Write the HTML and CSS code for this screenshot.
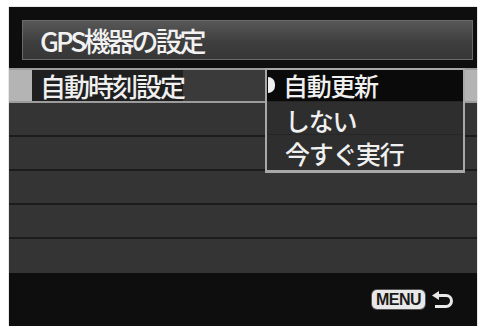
FILE: index.html
```html
<!DOCTYPE html>
<html lang="ja">
<head>
<meta charset="utf-8">
<link rel="stylesheet" href="styles.css">
</head>
<body>
<div class="screen">
  <div class="title">GPS機器の設定</div>
  <div class="list">
    <div class="row row-sel">
      <div class="sel-left"></div>
      <div class="label">自動時刻設定</div>
      <div class="fill"></div>
      <div class="sel-right"></div>
    </div>
    <div class="row"></div>
    <div class="row"></div>
    <div class="row"></div>
    <div class="row"></div>
    <div class="row last"></div>
    <div class="dropdown">
      <div class="item item-on"><span class="caret"></span>自動更新</div>
      <div class="item">しない</div>
      <div class="item">今すぐ実行</div>
    </div>
  </div>
  <div class="footer">
    <span class="menu-badge">MENU</span>
    <svg class="back" width="24" height="18" viewBox="0 0 24 18">
      <path d="M7 4.5 H15 A5.5 5.5 0 0 1 15 15.5 H4" fill="none" stroke="#e8e8e8" stroke-width="3"/>
      <polygon points="1,4.5 8,0 8,9" fill="#e8e8e8"/>
    </svg>
  </div>
</div>
</body>
</html>
```
FILE: styles.css
```css
html, body {
  margin: 0;
  padding: 0;
  background: #ffffff;
}
body {
  font-family: "Noto Sans CJK JP", "Noto Sans", sans-serif;
  font-weight: 500;
  color: #f0f0f0;
}
.screen {
  margin: 7px 0 0 9px;
  width: 468px;
  height: 319px;
  background: #0e0e0e;
  display: flex;
  flex-direction: column;
  box-shadow: 0 0 1px #777;
}
.title {
  margin: 13px 4px 0 13px;
  height: 40px;
  box-sizing: border-box;
  border: 1px solid #6a6a6a;
  background: linear-gradient(#585858, #3e3e3e 55%, #363636);
  font-size: 27px;
  line-height: 40px;
  padding-left: 17px;
  letter-spacing: -3px;
  color: #f2f2f2;
  overflow: hidden;
}
.list {
  margin-top: 8px;
  position: relative;
  display: flex;
  flex-direction: column;
}
.row {
  height: 34px;
  box-sizing: border-box;
  background: #343434;
  border-bottom: 2px solid #1c1c1c;
}
.row.last {
  border-bottom: none;
}
.row-sel {
  height: 35px;
  display: flex;
  background: #3a3a3a;
  border-top: 2px solid #9c9c9c;
  border-bottom: 2px solid #9c9c9c;
}
.sel-left {
  width: 23px;
  background: #b4b4b4;
}
.sel-right {
  width: 12px;
  background: #b4b4b4;
}
.label {
  width: 151px;
  background: #1f1f1f;
  font-size: 26px;
  line-height: 31px;
  padding-left: 8px;
  box-sizing: border-box;
  letter-spacing: -2px;
  white-space: nowrap;
}
.fill {
  flex: 1;
}
.dropdown {
  position: absolute;
  left: 256px;
  top: 0;
  width: 200px;
  height: 105px;
  box-sizing: border-box;
  border: 2px solid #a8a8a8;
  border-bottom-width: 3px;
  background: #2e2e2e;
  display: flex;
  flex-direction: column;
}
.item {
  height: 33px;
  font-size: 25px;
  line-height: 30px;
  padding-left: 18px;
  letter-spacing: -1.3px;
  white-space: nowrap;
  position: relative;
}
.item + .item {
  border-top: 1px solid #262626;
  padding-top: 3px;
  height: 33px;
  box-sizing: border-box;
}
.item-on {
  height: 31px;
  background: #0a0a0a;
  padding-left: 16px;
}
.caret {
  position: absolute;
  left: 1px;
  top: 7px;
  width: 7px;
  height: 16px;
  background: #f0f0f0;
  border-radius: 0 8px 8px 0;
}
.footer {
  flex: 1;
  display: flex;
  align-items: center;
  justify-content: flex-end;
  padding-right: 22px;
  gap: 6px;
}
.menu-badge {
  display: inline-block;
  background: #e8e8e8;
  color: #1a1a1a;
  border-radius: 5px;
  font-family: "Liberation Sans", Arial, sans-serif;
  font-weight: bold;
  font-size: 16px;
  line-height: 19px;
  height: 19px;
  padding: 0 4px;
  letter-spacing: -0.5px;
  box-shadow: 0 0 0 1px #555;
}
.back {
  display: block;
}
```
